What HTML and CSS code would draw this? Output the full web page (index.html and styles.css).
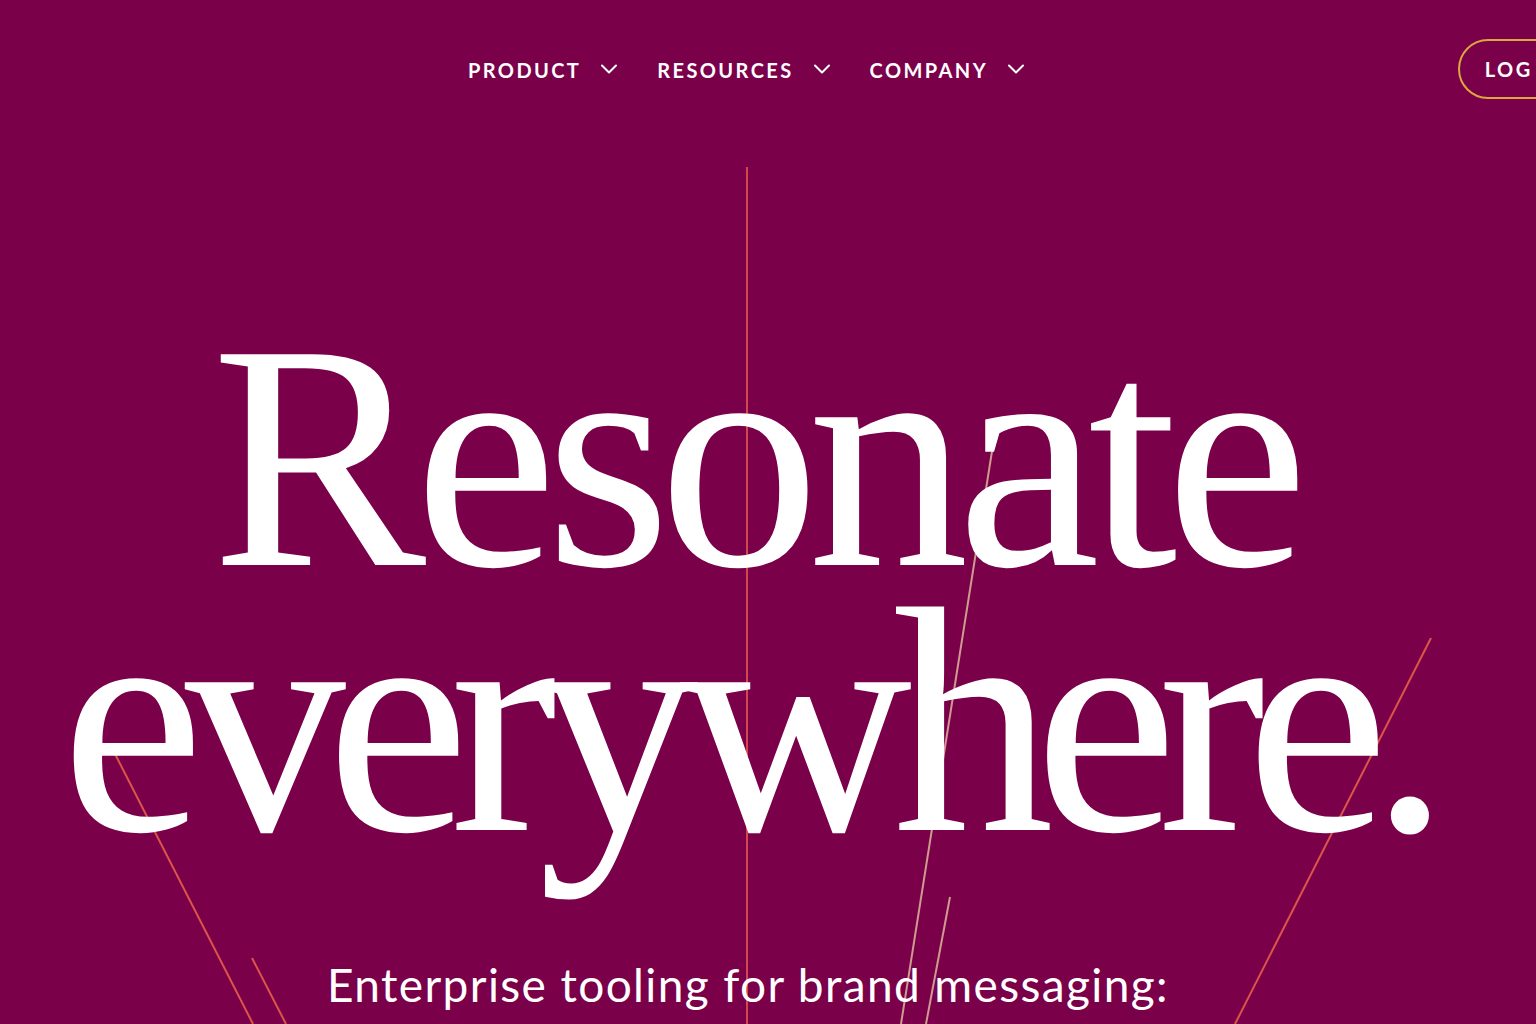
FILE: index.html
```html
<!DOCTYPE html>
<html lang="en">
<head>
<meta charset="utf-8">
<title>Resonate everywhere.</title>
<link rel="stylesheet" href="styles.css">
</head>
<body>
<div class="page">
  <svg class="rays" viewBox="0 0 1536 1024" width="1536" height="1024" aria-hidden="true">
    <line x1="747" y1="167" x2="747" y2="1024" class="ray-red"/>
    <line x1="113" y1="750" x2="253" y2="1024" class="ray-orange"/>
    <line x1="252" y1="958" x2="286" y2="1024" class="ray-orange"/>
    <line x1="993" y1="445" x2="901" y2="1024" class="ray-tan"/>
    <line x1="950" y1="897" x2="926" y2="1024" class="ray-tan"/>
    <line x1="1431" y1="638" x2="1235" y2="1024" class="ray-orange"/>
  </svg>

  <header class="header">
    <div class="header-left"></div>
    <nav class="menu">
      <a class="menu-item" href="#">PRODUCT
        <svg class="chev" viewBox="0 0 16 10" width="16" height="10"><polyline points="1,1.5 8,8.5 15,1.5"/></svg>
      </a>
      <a class="menu-item" href="#">RESOURCES
        <svg class="chev" viewBox="0 0 16 10" width="16" height="10"><polyline points="1,1.5 8,8.5 15,1.5"/></svg>
      </a>
      <a class="menu-item" href="#">COMPANY
        <svg class="chev" viewBox="0 0 16 10" width="16" height="10"><polyline points="1,1.5 8,8.5 15,1.5"/></svg>
      </a>
    </nav>
    <div class="header-right">
      <a class="login" href="#">LOG IN</a>
    </div>
  </header>

  <main class="hero">
    <h1 class="headline">
      <span class="line line-1">Resonate</span>
      <span class="line line-2">everywhere.</span>
    </h1>
    <p class="subtitle">Enterprise tooling for brand messaging:</p>
  </main>
</div>
</body>
</html>
```

FILE: styles.css
```css
* { box-sizing: border-box; }

html, body {
  margin: 0;
  padding: 0;
  height: 100%;
}

body {
  background: #7b004a;
  color: #ffffff;
  font-family: "Lato", "Liberation Sans", sans-serif;
  overflow: hidden;
}

.page {
  position: relative;
  width: 1536px;
  height: 1024px;
  overflow: hidden;
}

.rays {
  position: absolute;
  left: 0;
  top: 0;
  z-index: 0;
}

.rays line {
  stroke-width: 2;
  fill: none;
}

.ray-red { stroke: #d4474c; }
.ray-orange { stroke: #dc5549; }
.ray-tan { stroke: #cf9b90; }

.header {
  position: relative;
  z-index: 1;
  width: 1492px;
  height: 140px;
  display: grid;
  grid-template-columns: 1fr auto 1fr;
  align-items: center;
}

.menu {
  display: flex;
  align-items: center;
  gap: 40px;
}

.menu-item {
  display: flex;
  align-items: center;
  gap: 20px;
  color: #ffffff;
  text-decoration: none;
  font-family: "Lato", sans-serif;
  font-weight: 700;
  font-size: 20px;
  letter-spacing: 0.12em;
}

.chev {
  display: block;
  margin-top: -3px;
}

.chev polyline {
  fill: none;
  stroke: #ffffff;
  stroke-width: 2;
  stroke-linecap: round;
  stroke-linejoin: round;
}

.header-right {
  display: flex;
  justify-content: flex-end;
}

.login {
  display: flex;
  align-items: center;
  height: 60px;
  margin-top: -2px;
  padding: 0 28px 0 25px;
  margin-right: -104px;
  border: 2px solid #dca640;
  border-radius: 30px;
  color: #ffffff;
  text-decoration: none;
  font-family: "Lato", sans-serif;
  font-weight: 700;
  font-size: 20px;
  letter-spacing: 0.12em;
  white-space: nowrap;
}

.hero {
  position: relative;
  z-index: 1;
  width: 1496px;
  display: flex;
  flex-direction: column;
  align-items: center;
  padding-top: 184px;
}

.headline {
  margin: 0;
  font-family: "Liberation Serif", "Times New Roman", serif;
  font-weight: 400;
  font-size: 322px;
  line-height: 265px;
  text-align: center;
  white-space: nowrap;
}

.line { display: block; }

.line-1 { letter-spacing: -0.037em; margin-left: 12px; }
.line-2 { letter-spacing: -0.06em; margin-left: -4px; }

.subtitle {
  margin: 103px 0 0;
  font-family: "Lato", sans-serif;
  font-weight: 400;
  font-size: 46px;
  line-height: 1.2;
  letter-spacing: 0.03em;
}
```
